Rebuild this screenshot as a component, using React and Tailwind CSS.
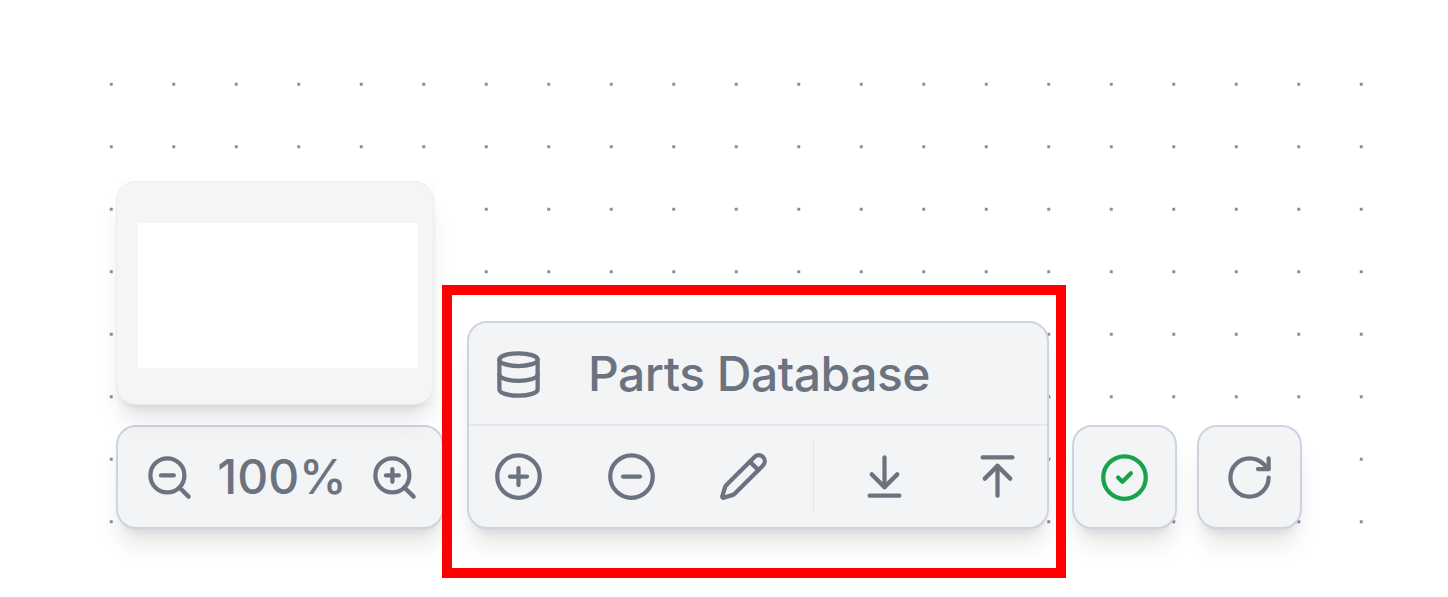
import React from "react";
import {
  ArrowDownToLine,
  ArrowUpToLine,
  CircleCheck,
  CircleMinus,
  CirclePlus,
  Database,
  Pencil,
  RotateCw,
  ZoomIn,
  ZoomOut,
} from "lucide-react";

const SHADOW = "shadow-[0_20px_25px_-5px_rgba(0,0,0,0.1),0_8px_10px_-6px_rgba(0,0,0,0.1)]";
const PANEL = `rounded-[20px] border-2 border-[#cbd5e1] bg-[#f3f4f6] ${SHADOW}`;

function Icon({ as: Glyph, className = "text-[#6b7280]" }) {
  return <Glyph size={51} strokeWidth={2} className={`shrink-0 ${className}`} />;
}

function SquareButton({ children, className = "" }) {
  return (
    <div className={`flex h-[104px] w-[105px] items-center justify-center ${PANEL} ${className}`}>
      {children}
    </div>
  );
}

function Minimap() {
  return (
    <div className="relative h-[224px] w-[318px]">
      <div className="absolute left-[2px] top-[2px] h-full w-full bg-[#fdfdfd]" />
      <div className={`relative h-full w-full rounded-[20px] border border-[#ececee] bg-[#f5f5f6] pl-[21px] pt-[41px] ${SHADOW}`}>
        <div className="h-[145px] w-[280px] bg-white" />
      </div>
    </div>
  );
}

function ZoomPanel() {
  return (
    <div className={`flex h-[104px] w-[328px] items-center pl-[26px] pr-[22px] ${PANEL}`}>
      <Icon as={ZoomOut} />
      <span className="flex-1 text-center text-[48px] font-medium leading-none text-[#6b7280]">100%</span>
      <Icon as={ZoomIn} />
    </div>
  );
}

function DatabasePanel() {
  return (
    <div className={`w-[582px] ${PANEL}`}>
      <div className="flex h-[103px] items-center gap-[44px] border-b-2 border-[#e5e7eb] px-6 pt-px">
        <Icon as={Database} />
        <span className="text-[48px] font-medium leading-none tracking-[-0.5px] text-[#6b7280]">Parts Database</span>
      </div>
      <div className="flex h-[101px] items-center px-6">
        <div className="flex items-center gap-[61.5px]">
          <Icon as={CirclePlus} />
          <Icon as={CircleMinus} />
          <Icon as={Pencil} />
        </div>
        <div className="ml-[44px] mr-[45px] h-[74px] w-[2px] bg-[#e5e7eb]" />
        <div className="flex items-center gap-[62px]">
          <Icon as={ArrowDownToLine} />
          <Icon as={ArrowUpToLine} />
        </div>
      </div>
    </div>
  );
}

export default function App() {
  return (
    <div className="relative h-[597px] w-full overflow-hidden bg-white font-['Inter',sans-serif]">
      <div className="pl-20 pt-[53px]">
        <div className="flex h-[500px] w-[1312.5px] items-end bg-[radial-gradient(circle,#8b8d9b_1.4px,transparent_1.6px)] bg-size-[62.5px_62.5px] pb-[24px] pl-[36px]">
          <div className="flex flex-col gap-5">
            <Minimap />
            <ZoomPanel />
          </div>
          <div className="ml-[23px]">
            <DatabasePanel />
          </div>
          <SquareButton className="ml-[23px]">
            <Icon as={CircleCheck} className="text-[#16a34a]" />
          </SquareButton>
          <SquareButton className="ml-[20px]">
            <Icon as={RotateCw} />
          </SquareButton>
        </div>
      </div>
      {/* annotation frame over the toolbar */}
      <div className="absolute left-[442px] top-[285px] h-[293px] w-[624px] border-[10px] border-[#ff0000]" />
    </div>
  );
}
